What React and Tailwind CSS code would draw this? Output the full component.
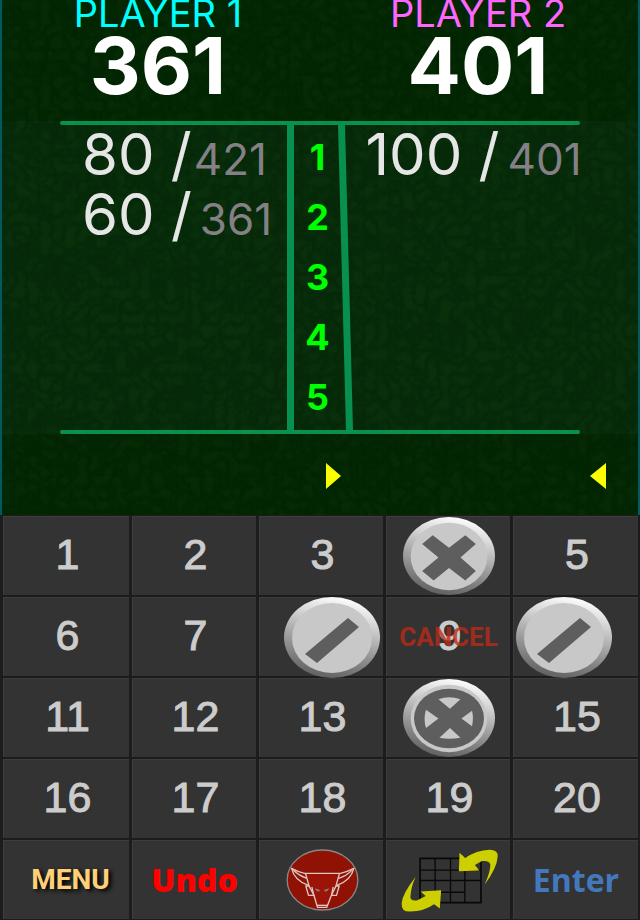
import React from "react";

const inter = "font-['Inter',sans-serif]";
const arial = "font-['Liberation_Sans',Arial,sans-serif]";
const roboto = "font-['Roboto',sans-serif]";

function Felt() {
  return (
    <svg className="pointer-events-none absolute inset-0 h-full w-full opacity-5" aria-hidden="true">
      <filter id="felt">
        <feTurbulence type="turbulence" baseFrequency="0.08" numOctaves="4" seed="4" />
        <feColorMatrix values="0 0 0 0 0.1  0 0 0 0 0.4  0 0 0 0 0.06  2 0 0 0 -0.1" />
      </filter>
      <rect width="100%" height="100%" filter="url(#felt)" />
    </svg>
  );
}

function Player({ name, score, color }) {
  return (
    <div className="flex flex-col items-center">
      <h2 className={`text-[38px] leading-[27px] ${color}`}>{name}</h2>
      <p className="text-[79px] leading-[76px] font-bold text-white">{score}</p>
    </div>
  );
}

function Turns({ turns, className }) {
  return (
    <ol className={`flex flex-col ${className}`}>
      {turns.map((t) => (
        <li key={t.left} className={`flex h-[60px] items-baseline whitespace-nowrap leading-[59px] ${t.gap}`}>
          <span className="text-[58px] text-[#e6e6e6]">{t.points} /</span>
          <span className="text-[44px] text-[#858085]">{t.left}</span>
        </li>
      ))}
    </ol>
  );
}

function Disc({ mark, className }) {
  const id = `rim-${mark}`;
  return (
    <svg viewBox="0 0 96 81" preserveAspectRatio="none" className={className} aria-hidden="true">
      <defs>
        <linearGradient id={id} x1="0.65" y1="0" x2="0.4" y2="1">
          <stop offset="0" stopColor="#ffffff" />
          <stop offset="0.25" stopColor="#d8d8d8" />
          <stop offset="0.6" stopColor="#9c9c9c" />
          <stop offset="1" stopColor="#606060" />
        </linearGradient>
      </defs>
      <ellipse cx="48" cy="40.5" rx="48" ry="40.5" fill={`url(#${id})`} />
      <ellipse cx="48" cy="41" rx="40" ry="35" fill="#c8c8c8" />
      {mark === "slash" && <path d="M64 21 L75 30 L33 66 L21 57 Z" fill="#5e5e5e" />}
      {mark === "cross" && (
        <path d="M31 19 L48 32 L65 19 L76 28 L60 42 L76 56 L65 66 L48 53 L32 66 L20 56 L37 42 L20 28 Z" fill="#5e5e5e" />
      )}
      {mark === "ring" && (
        <>
          <ellipse cx="48" cy="41" rx="36.5" ry="31" fill="#5e5e5e" />
          <path
            d="M37 21 Q48 17 60 21 L49 31 Z M38 61 L49 51 L60 61 Q48 63 38 61 Z M24 32 L37 41 L24 51 Q21 42 24 32 Z M72 33 L61 41 L72 49 Q74 41 72 33 Z"
            fill="#c8c8c8"
          />
        </>
      )}
    </svg>
  );
}

function Bull() {
  return (
    <svg viewBox="80 60 218 186" className="h-[62px] w-[73px]" aria-hidden="true">
      <ellipse cx="189" cy="153" rx="106" ry="90" fill="#901204" stroke="#8a8585" strokeWidth="4" />
      <g fill="none" stroke="#dcc8c4" strokeWidth="4" strokeLinejoin="round">
        <path d="M138 133 L240 133 L229 172 L216 198 L202 235 L174 235 L163 198 L149 172 Z" fill="#9c1408" />
        <path d="M138 134 Q118 130 96 118 Q105 155 147 169" />
        <path d="M240 134 Q260 130 283 118 Q274 155 232 169" />
        <path d="M102 124 Q118 140 142 148 M277 124 Q262 140 237 148" />
        <path d="M149 171 L139 171 L147 199 L163 199 L157 174 M230 171 L239 171 L231 199 L216 199 L221 174" />
        <path d="M172 229 L205 229" />
      </g>
      <path d="M166 178 L182 183 L178 188 L170 185 Z M209 178 L193 183 L197 188 L205 185 Z" fill="#8f7772" />
    </svg>
  );
}

function SwapBoard() {
  return (
    <svg viewBox="425 52 293 194" className="h-[65px] w-[98px]" aria-hidden="true">
      <g fill="none" stroke="#080808" strokeWidth="4">
        <path d="M482 83 H664 V215 H482 Z" strokeWidth="5" />
        <path d="M527 83 V215 M573 83 V215 M616 120 V215 M482 118 H664 M482 149 H664 M482 184 H616" />
      </g>
      <g fill="#cccf00">
        <path d="M600 66 L617 82 Q650 58 690 57 Q716 57 714 78 Q712 112 675 161 Q693 121 692 101 Q689 88 667 91 L646 103 L659 119 L598 121 Z" />
        <path d="M469 138 Q455 167 453 199 Q455 211 474 208 L499 195 L483 182 L545 178 L541 233 L524 220 Q494 241 453 242 Q425 243 427 216 Q430 188 469 138 Z" />
      </g>
    </svg>
  );
}

function Key({ label, className = "justify-center", children }) {
  return (
    <button
      type="button"
      aria-label={label}
      className={`relative flex min-w-0 items-center border-t border-l border-[#3d3d3d] bg-[#333333] ${className}`}
    >
      {children}
    </button>
  );
}

function Numeral({ n }) {
  return (
    <span className={`${arial} pl-0.5 pb-1 text-[43px] leading-[48px] text-[#cccccc] [-webkit-text-stroke:1px_#cccccc]`}>
      {n}
    </span>
  );
}

function Digit({ n }) {
  return (
    <Key label={String(n)}>
      <Numeral n={n} />
    </Key>
  );
}

export default function App() {
  return (
    <main className={`${inter} min-h-screen w-full overflow-hidden bg-[#1c1c1c]`}>
      <section className="relative isolate h-[515px] border-x-2 border-[#005a60] bg-[#012301]">
        <div className="relative z-10 grid h-[126px] grid-cols-[312fr_320fr] gap-x-1">
          <Player name="PLAYER 1" score="361" color="text-[#00ffff]" />
          <Player name="PLAYER 2" score="401" color="text-[#ff66ff]" />
        </div>

        <div className="-mt-[5px] h-[313px] bg-[#052808] px-[58px]">
          <div className="h-[4px] rounded-full bg-[#089050]" />
          <div className="relative z-10 grid h-[305px] grid-cols-[minmax(0,1fr)_7px_44px_16px_minmax(0,1fr)]">
            <Turns
              className="pl-[22px]"
              turns={[
                { points: "80", left: "421", gap: "gap-0.5" },
                { points: "60", left: "361", gap: "gap-2" },
              ]}
            />
            <div className="bg-[#089050]" />
            <ol className="pt-0.5 pl-1 text-center text-[36px] leading-[60px] font-bold text-[#00ff00]">
              {[1, 2, 3, 4, 5].map((n) => (
                <li key={n}>{n}</li>
              ))}
            </ol>
            <svg viewBox="0 0 16 305" preserveAspectRatio="none" className="h-full w-[16px]" aria-hidden="true">
              <path d="M0 0 H7 L15 305 H8 Z" fill="#089050" />
            </svg>
            <Turns
              className="pl-[12px]"
              turns={[{ points: "100", left: "401", gap: "gap-2" }]}
            />
          </div>
          <div className="h-[4px] rounded-full bg-[#089050]" />
        </div>

        <div className="flex h-[81px] items-center justify-end gap-[249px] pt-0.5 pr-8">
          <svg viewBox="0 0 15 26" className="h-[26px] w-[15px]" aria-hidden="true">
            <path d="M0 0 L15 13 L0 26 Z" fill="#ffff00" />
          </svg>
          <svg viewBox="0 0 16 26" className="h-[26px] w-[16px]" aria-hidden="true">
            <path d="M16 0 L0 13 L16 26 Z" fill="#ffff00" />
          </svg>
        </div>
        <Felt />
      </section>

      <section className="grid auto-rows-[79px] grid-cols-[126fr_124fr_124fr_124fr_125fr] gap-x-[3px] gap-y-[2px] pt-px pr-[2px] pl-[3px]">
        <Digit n={1} />
        <Digit n={2} />
        <Digit n={3} />
        <Key label="4">
          <Disc mark="cross" className="h-[78px] w-[92px]" />
        </Key>
        <Digit n={5} />
        <Digit n={6} />
        <Digit n={7} />
        <Key label="8" className="justify-end pr-[3px]">
          <Disc mark="slash" className="h-[81px] w-[96px] shrink-0" />
        </Key>
        <Key label="Cancel">
          <Numeral n={9} />
          <span
            className={`${roboto} absolute inset-0 flex items-center justify-center text-[26px] font-bold text-[#c02a14]/80`}
          >
            CANCEL
          </span>
        </Key>
        <Key label="10" className="justify-start pl-[2px]">
          <Disc mark="slash" className="h-[81px] w-[96px] shrink-0" />
        </Key>
        <Digit n={11} />
        <Digit n={12} />
        <Digit n={13} />
        <Key label="14">
          <Disc mark="ring" className="h-[78px] w-[92px]" />
        </Key>
        <Digit n={15} />
        <Digit n={16} />
        <Digit n={17} />
        <Digit n={18} />
        <Digit n={19} />
        <Digit n={20} />
        <Key label="Menu">
          <span
            className={`${roboto} pl-2 text-[28px] leading-9 font-bold text-[#ffd078] [text-shadow:3px_2px_4px_#000000]`}
          >
            MENU
          </span>
        </Key>
        <Key label="Undo">
          <span className="font-['Open_Sans',sans-serif] text-[32px] leading-10 font-extrabold text-[#ff0000]">Undo</span>
        </Key>
        <Key label="Bull" className="justify-center pl-0.5">
          <Bull />
        </Key>
        <Key label="Switch board" className="justify-center pl-0.5">
          <SwapBoard />
        </Key>
        <Key label="Enter">
          <span className="font-['Open_Sans',sans-serif] text-[32px] leading-10 font-bold text-[#4478bc]">Enter</span>
        </Key>
      </section>
    </main>
  );
}
